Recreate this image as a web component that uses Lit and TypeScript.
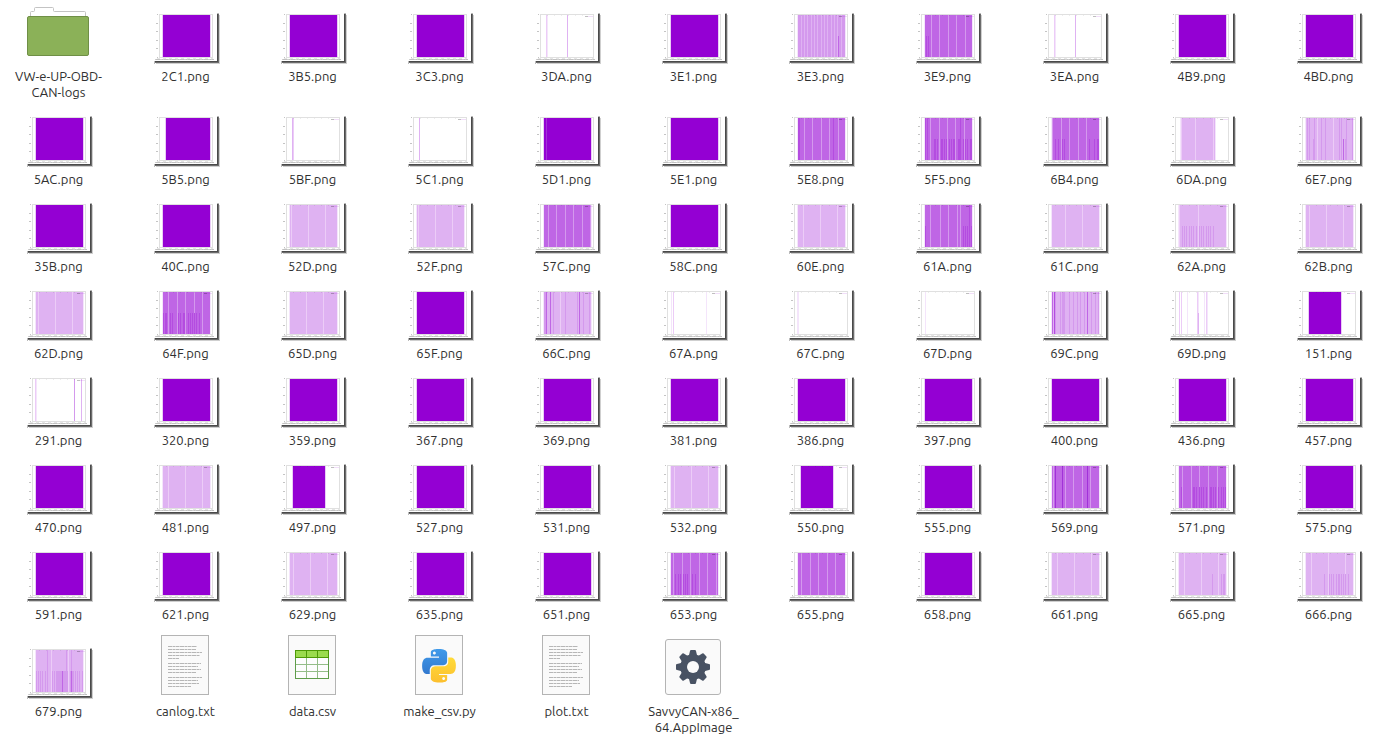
import { LitElement, html, svg, css, nothing } from "lit";
import { customElement, property } from "lit/decorators.js";

/* Tints of the plot colour, from faintest to solid. */
const TINTS: Record<string, string> = {
  a: "#f4e5fb",
  b: "#ecccf7",
  c: "#dfb2f2",
  d: "#d499ed",
  e: "#bf66e5",
  f: "#b44ce0",
  g: "#a132d8",
  h: "#9400d3",
};

type Kind = "plot" | "folder" | "text" | "csv" | "python" | "app";

interface FileEntry {
  name: string;
  kind: Kind;
  /** Base tint of the plotted area; empty for a blank chart. */
  tint?: string;
  /** Plotted bars: tint, x, optional ":width", optional "/" for half height. */
  bars?: string;
  from?: number;
  to?: number;
}

const plot = (id: string, tint = "h", bars = "", from = 11, to = 58): FileEntry => ({
  name: `${id}.png`,
  kind: "plot",
  tint,
  bars,
  from,
  to,
});

const FILES: FileEntry[] = [
  { name: "VW-e-UP-OBD-CAN-logs", kind: "folder" },
  plot("2C1"),
  plot("3B5"),
  plot("3C3"),
  plot("3DA", "", "b13 a14 c34"),
  plot("3E1"),
  plot("3E3", "d", "c14 c17 c20 c24 c27 c30 c34 c37 c40 c44 c47 c50 c54 e51/"),
  plot("3E9", "e", "d17 d25 d34 d42 d51 f12/ f14/"),
  plot("3EA", "", "b13 a14 c34"),
  plot("4B9"),
  plot("4BD"),
  plot("5AC"),
  plot("5B5", "h", "", 14, 58),
  plot("5BF", "", "c13 b14"),
  plot("5C1", "", "c13"),
  plot("5D1", "h", "g13"),
  plot("5E1"),
  plot("5E8", "e", "f11:3 e13 d17 d25 d34 d42 f46 d51"),
  plot("5F5", "e", "f11 f13 d16 d25 d33 d41 d50 f46 f20:2/ f23/ f27:2/ f30/ f32/ f35/ f37/ f39:2/ f44:3/ f49/ f51/ f53/ f56:2/"),
  plot("6B4", "e", "d11 d20 d28 d37 d45 f14/ f17/ f21/ f23/ f48/ f53/ f56:2/"),
  plot("6DA", "c", "b13 b27 b45", 13, 47),
  plot("6E7", "c", "d12 d14 d19 b22 d26 d30 b38 d44 d46 d51 d57 d18/ e48/ d50/"),
  plot("35B"),
  plot("40C"),
  plot("52D", "c", "b12 b29 b46"),
  plot("52F", "c", "b12 b29 b46"),
  plot("57C", "e", "d15 d23 d32 d40 d49 d57"),
  plot("58C"),
  plot("60E", "c", "b16 b33 b50"),
  plot("61A", "e", "d16 d26 d34 d43 d46 f55 f11/ f49/ f51/ f53/ f57/"),
  plot("61C", "c", "b24 b41"),
  plot("62A", "c", "b11 b30 d14/ d16/ d18/ d21/ d23/ d25/ d28/ d31/ d33/ d35/ d38/ d40/ d42/ d45/"),
  plot("62B", "c", "b14 b31 b48"),
  plot("62D", "c", "b13 b30 b47"),
  plot("64F", "e", "d16 d25 d33 d42 d50 f11/ f13:2/ f18/ f20/ f26/ f28/ f31:2/ f36/ f38/ f40/ f42/ f44/ f47/"),
  plot("65D", "c", "b27 b44"),
  plot("65F"),
  plot("66C", "c", "d11:2 e13 e17 d20 b27 d32 d44 e46 d50 d56"),
  plot("67A", "", "a11 b13 a46"),
  plot("67C", "", "a10:2"),
  plot("67D", "", "a11"),
  plot("69C", "c", "e11 f13 d14 d19 d21:3 d28 d32 d36 d39 d43 e46 d50 d54 d57"),
  plot("69D", "", "b11 b13 a19 b29 a30 a36 b38 a39 c30/"),
  plot("151", "h", "", 14, 46),
  plot("291", "", "b10 a11 d49 c56"),
  plot("320"),
  plot("359"),
  plot("367"),
  plot("369"),
  plot("381"),
  plot("386"),
  plot("397"),
  plot("400"),
  plot("436"),
  plot("457"),
  plot("470"),
  plot("481", "c", "b16 b33 b50"),
  plot("497", "h", "", 14, 46),
  plot("527"),
  plot("531"),
  plot("532", "c", "b14 b31 b48"),
  plot("550", "h", "", 14, 46),
  plot("555"),
  plot("569", "e", "d12 g14 g21 d24 d32 d41 g46 d49"),
  plot("571", "e", "d14 d23 d31 d40 d49 f13/ f25:2/ f28/ f31/ f33/ f35/ f38/ f42:2/ f45/ f47/ f50/ f53/ f55/ f57/"),
  plot("575"),
  plot("591"),
  plot("621"),
  plot("629", "c", "b14 b31 b48"),
  plot("635"),
  plot("651"),
  plot("653", "e", "d13 d22 d30 d39 d47 d56 f15/ f18/ f20/ f23/ f25/ f27/ f32/ f35/"),
  plot("655", "e", "d14 d23 d31 d40 d48"),
  plot("658"),
  plot("661", "c", "b16 b33 b50"),
  plot("665", "c", "b16 b33 b50 d44/ d53/ d55:2/"),
  plot("666", "c", "b16 b33 b50 d29/ d34/ d36/ d38/ d41/ d43:2/ d46/ d48/ d50/ d53/"),
  plot("679", "c", "d22 b26 d41 b43 d46 d11/ d13/ d15/ d17/ d20/ d27/ d29/ d31:6/ e37/ d38:5/ d45:4/ e46/ d50/ d52/ d54/ d57/"),
  { name: "canlog.txt", kind: "text" },
  { name: "data.csv", kind: "csv" },
  { name: "make_csv.py", kind: "python" },
  { name: "plot.txt", kind: "text" },
  { name: "SavvyCAN-x86_64.AppImage", kind: "app" },
];

const TOP = 4;
const BOTTOM = 46;
const HALF = 25;

function drawBar(code: string) {
  const half = code.endsWith("/");
  const [x, w = "1"] = code.slice(1).replace("/", "").split(":");
  const y = half ? HALF : TOP;
  return svg`<rect x=${x} y=${y} width=${w} height=${BOTTOM - y} fill=${TINTS[code[0]]}></rect>`;
}

function plotIcon({ tint, bars, from = 11, to = 58 }: FileEntry) {
  const solid = tint === "h";
  return html`<svg class="icon" width="67" height="53" viewBox="0 0 67 53" shape-rendering="crispEdges" aria-hidden="true">
    <path d="M2 50h1v3h-1zM65 2h2v1h-2z" fill="#bbb"></path>
    <path d="M3 50.5h63M65.5 3v47" stroke="#4a4a4a"></path>
    <path d="M3 51.5h63.500M66.5 3v49" stroke="#6c6c6c"></path>
    <path d="M4 52.5h63.500M67.5 4v49" stroke="#cfcfcf"></path>
    <rect x="2" y="2" width="63" height="48" fill="#fff"></rect>
    <rect x="7.5" y="3.5" width="53" height="43" fill="none" stroke="#e0e0e0"></rect>
    <path d="M4 12.5h2M4 20.5h2M4 29.5h2M4 37.5h2M5 3.5h1M5 46.5h1" stroke="#c4c4c4"></path>
    <path d="M3 48.5h59" stroke="#d0d0d0"></path>
    <path d="M4 48.5h58" stroke="#c2c2c2" stroke-dasharray="4 2 1 1"></path>
    <path d="M5 47.5h56" stroke="#e6e6e6" stroke-dasharray="3 3"></path>
    ${tint
      ? svg`<rect x=${from - 1} y=${TOP} width=${to - from + 2} height=${BOTTOM - TOP} fill=${solid ? "#e9ccf6" : "#f4e5fb"}></rect>
          <rect x=${from} y=${TOP} width=${to - from} height=${BOTTOM - TOP} fill=${TINTS[tint]}></rect>`
      : nothing}
    ${(bars ?? "").split(" ").filter(Boolean).map(drawBar)}
    ${solid && to > 50
      ? nothing
      : svg`<path d="M52 5.5h3" stroke="#000" stroke-opacity=".25"></path><path d="M55 5.5h5" stroke="#9400d3" stroke-opacity=".13"></path>
          <path d="M14 4.5h40" stroke="#000" stroke-opacity=".07" stroke-dasharray="1 6"></path>`}
  </svg>`;
}

const folderIcon = html`<svg class="icon" width="63" height="57" viewBox="0 0 63 57" aria-hidden="true">
  <path d="M3.5 12V5.500q0-1 1-1H6.500q1 0 1-1V1.500q0-1 1-1H25.500q1 0 1 1V3.500q0 1 1 1H57.500q1 0 1 1V12" fill="#fff" stroke="#c3c3c3"></path>
  <rect x=".5" y="9.500" width="61" height="39" rx="1.500" fill="#8bb158" stroke="#6f8f46"></rect>
</svg>`;

/* The page's top border sits just above the icon box. */
function sheet(content: unknown) {
  return html`<svg class="icon" width="49" height="63" viewBox="0 1 49 63" aria-hidden="true">
    <rect x=".5" y=".5" width="47" height="59" fill="#fafafa" stroke="#b4b4b4"></rect>
    ${content}
  </svg>`;
}

const TEXT_LINES = [
  [11, 29], [14, 28], [17, 34], [20, 32], [23, 11],
  [28, 33], [31, 30], [34, 33], [37, 28],
  [42, 34], [45, 30], [48, 31], [51, 23],
];

const textIcon = sheet(
  svg`<g stroke="#b6b6b6" stroke-dasharray="4.500 .5 2.500 .5 3.500 .5">${TEXT_LINES.map(
    ([y, w]) => svg`<path d=${`M7 ${y + 0.5}h${w}`}></path>`
  )}</g>`
);

const csvIcon = sheet(svg`
  <rect x="7.5" y="15.500" width="33" height="28" fill="#fdfdfd" stroke="#5f9d4a"></rect>
  <path d="M8 29.500h32M8 36.500h32M18.500 23v20M29.500 23v20" stroke="#94bd88"></path>
  <rect x="7.5" y="15.500" width="33" height="7" fill="#9bdb4d" stroke="#4e9a06"></rect>
  <path d="M18.500 16v6M29.500 16v6" stroke="#4e9a06"></path>`);

const pythonIcon = sheet(svg`
  <defs>
    <linearGradient id="blue" x2="0" y2="1"><stop offset="0" stop-color="#3f9aea"></stop><stop offset="1" stop-color="#3279cf"></stop></linearGradient>
    <linearGradient id="gold" x2="0" y2="1"><stop offset="0" stop-color="#ffdb3a"></stop><stop offset="1" stop-color="#fcbf2e"></stop></linearGradient>
  </defs>
  <g transform="translate(7.2 14) scale(1.4)">
    <path fill="url(#blue)" d="M14.250.18l.9.2.73.26.59.3.45.32.34.34.25.34.16.33.1.3.04.26.02.2-.01.13V8.500l-.05.63-.13.55-.21.46-.26.38-.3.31-.33.25-.35.19-.35.14-.33.1-.3.07-.26.04-.21.02H8.770l-.69.05-.59.14-.5.22-.41.27-.33.32-.27.35-.2.36-.15.37-.1.35-.07.32-.04.27-.02.21v3.060H3.170l-.21-.03-.28-.07-.32-.12-.35-.18-.36-.26-.36-.36-.35-.46-.32-.59-.28-.73-.21-.88-.14-1.050-.05-1.230.06-1.220.16-1.040.24-.87.32-.71.36-.57.4-.44.42-.33.42-.24.4-.16.36-.1.32-.05.24-.01h.16l.06.01h8.160v-.83H6.180l-.01-2.750-.02-.37.05-.34.11-.31.17-.28.25-.26.31-.23.38-.2.44-.18.51-.15.58-.12.64-.1.71-.06.77-.04.84-.02 1.270.05zm-6.300 1.980l-.23.33-.08.41.08.41.23.34.33.22.41.09.41-.09.33-.22.23-.34.08-.41-.08-.41-.23-.33-.33-.22-.41-.09-.41.09z"></path>
    <path fill="url(#gold)" d="M21.040 6.110l.28.06.32.12.35.18.36.27.36.35.35.47.32.59.28.73.21.88.14 1.040.05 1.230-.06 1.230-.16 1.040-.24.86-.32.71-.36.57-.4.45-.42.33-.42.24-.4.16-.36.09-.32.05-.24.02-.16-.01h-8.220v.82h5.840l.01 2.760.02.36-.05.34-.11.31-.17.29-.25.25-.31.24-.38.2-.44.17-.51.15-.58.13-.64.09-.71.07-.77.04-.84.01-1.270-.04-1.070-.14-.9-.2-.73-.25-.59-.3-.45-.33-.34-.34-.25-.34-.16-.33-.1-.3-.04-.25-.02-.2.01-.13v-5.340l.05-.64.13-.54.21-.46.26-.38.3-.32.33-.24.35-.2.35-.14.33-.1.3-.06.26-.04.21-.02.13-.01h5.840l.69-.05.59-.14.5-.21.41-.28.33-.32.27-.35.2-.36.15-.36.1-.35.07-.32.04-.28.02-.21V6.070h2.090l.14.01zM14.570 20.360l-.23.33-.08.41.08.41.23.33.33.23.41.08.41-.08.33-.23.23-.33.08-.41-.08-.41-.23-.33-.33-.23-.41-.08-.41.08z"></path>
  </g>`);

const appIcon = html`<svg class="icon" width="57" height="60" viewBox="0 0 57 60" aria-hidden="true">
  <rect x=".5" y=".5" width="55" height="55" rx="2.500" fill="#fafafa" stroke="#b4b4b4"></rect>
  <g transform="translate(28 28)" fill="#485263">
    <circle r="12.800"></circle>
    ${[0, 45, 90, 135, 180, 225, 270, 315].map(
      (a) => svg`<path transform=${`rotate(${a})`} d="M-4.200-11L-3-16q.2-1 1-1h4q.8 0 1 1l1.200 5z"></path>`
    )}
    <circle r="6" fill="#fafafa"></circle>
  </g>
</svg>`;

@customElement("file-icon")
class FileIcon extends LitElement {
  @property({ attribute: false }) file!: FileEntry;

  static styles = css`
    :host {
      display: block;
    }
    .icon {
      display: block;
      overflow: visible;
    }
  `;

  render() {
    switch (this.file.kind) {
      case "folder":
        return folderIcon;
      case "text":
        return textIcon;
      case "csv":
        return csvIcon;
      case "python":
        return pythonIcon;
      case "app":
        return appIcon;
      default:
        return plotIcon(this.file);
    }
  }
}

@customElement("app-root")
class AppRoot extends LitElement {
  static styles = css`
    :host {
      display: block;
      min-height: 100vh;
      box-sizing: border-box;
      padding: 1px 2px 0 5px;
      background: #fff;
      color: #303030;
      font: 13px/16px "Ubuntu", "Noto Sans", "Open Sans", sans-serif;
    }
    .files {
      display: grid;
      grid-template-columns: repeat(auto-fill, minmax(100px, 1fr));
      column-gap: 20px;
      margin: 0;
      padding: 0;
      list-style: none;
    }
    .entry {
      display: contents;
    }
    .file {
      display: grid;
      grid-row: span 2;
      grid-template-rows: subgrid;
      justify-items: center;
      color: inherit;
      text-decoration: none;
    }
    .picture {
      align-self: end;
      padding-top: 6px;
    }
    .label {
      padding: 4px 0 8px;
      text-align: center;
    }
  `;

  render() {
    return html`<ul class="files">
      ${FILES.map(
        (file) => html`<li class="entry">
          <a class="file" href="#">
            <file-icon class="picture" .file=${file}></file-icon>
            <span class="label">${this.breakable(file.name)}</span>
          </a>
        </li>`
      )}
    </ul>`;
  }

  /* Long names may also wrap after an underscore. */
  private breakable(name: string) {
    if (name.length < 16) return name;
    return name.split("_").map((part, i) => (i ? html`_<wbr />${part}` : part));
  }
}
